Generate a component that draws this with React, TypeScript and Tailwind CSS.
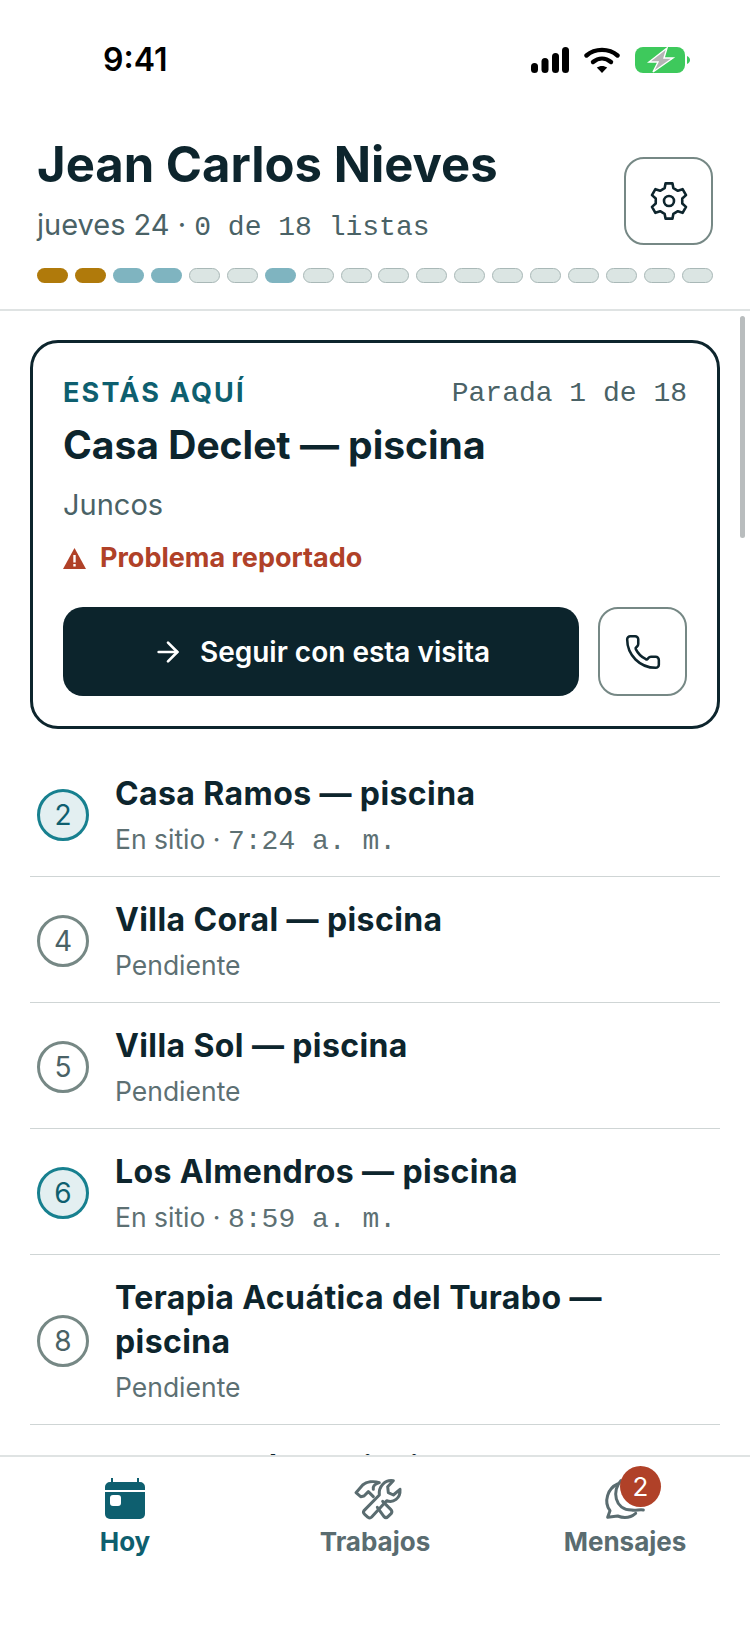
import { ArrowRight, Phone } from "lucide-react";

const sans = "font-['Inter','Noto_Sans',sans-serif]";
const mono = "font-['Liberation_Mono',monospace] text-[28px] leading-none";

const pills = [
  "a", "a", "t", "t", "g", "g", "t", "g", "g", "g", "g", "g", "g", "g", "g", "g", "g", "g",
];

const stops = [
  { n: 2, title: "Casa Ramos — piscina", active: true, time: "7:24 a. m." },
  { n: 4, title: "Villa Coral — piscina" },
  { n: 5, title: "Villa Sol — piscina" },
  { n: 6, title: "Los Almendros — piscina", active: true, time: "8:59 a. m." },
  { n: 8, title: "Terapia Acuática del Turabo — piscina" },
  { n: 9, title: "Casa María — piscina" },
];

const StatusBar = () => (
  <div className="h-[118px] shrink-0 flex items-start justify-between pl-[103px] pr-[60px] pt-[41px]">
    <span className="text-[32px] leading-[38px] font-semibold text-black">9:41</span>
    <div className="flex items-center gap-[15px] pt-[6px]">
      <svg width="38" height="26" viewBox="0 0 38 26" fill="#000">
        <rect x="0" y="16" width="7" height="10" rx="3.5" />
        <rect x="10.5" y="11" width="7" height="15" rx="3.5" />
        <rect x="21" y="6" width="7" height="20" rx="3.5" />
        <rect x="31" y="0" width="7" height="26" rx="3.5" />
      </svg>
      <svg width="36" height="26" viewBox="0 0 36 26" fill="none" stroke="#000" strokeWidth="4.4" strokeLinecap="round">
        <path d="M2.5 8.5C11 1 25 1 33.5 8.5" />
        <path d="M9 15C14.5 10.5 21.5 10.5 27 15" />
        <path d="M18 26l-5.2-5.4c3-2.2 7.4-2.2 10.4 0z" fill="#000" stroke="none" />
      </svg>
      <svg width="55" height="26" viewBox="0 0 55 26">
        <rect x="0" y="0" width="50" height="26" rx="8" fill="#3ec95c" />
        <path d="M52 9c2 1 3 2.4 3 4s-1 3-3 4z" fill="#3ec95c" />
        <path d="M32 1 14 15h9l-5 10 20-14h-9l3-10z" fill="#b5b5b5" stroke="#fff" strokeWidth="1.4" />
      </svg>
    </div>
  </div>
);

const GearIcon = () => (
  <svg width="40" height="42" viewBox="-2 -2 40 42" fill="none" stroke="currentColor" strokeWidth="2.6" strokeLinejoin="round">
    <path d="M13.6 6.24 14.57 1.33H21.43L22.4 6.24 26.86 8.81 31.59 7.19 35.02 13.14 31.25 16.42V21.58L35.02 24.86 31.59 30.81 26.86 29.19 22.4 31.76 21.43 36.67H14.57L13.6 31.76 9.14 29.19 4.41 30.81 0.98 24.86 4.75 21.58V16.42L0.98 13.14 4.41 7.19 9.14 8.81Z" />
    <circle cx="18" cy="19" r="5" />
  </svg>
);

const StopRow = ({ n, title, active, time }: { n: number; title: string; active?: boolean; time?: string }) => (
  <div className="flex items-center gap-[26px] pl-[7px] pt-[21px] pb-[19px] border-b border-[#cfd5d5]">
    <div
      className={
        active
          ? "w-[52px] h-[52px] shrink-0 rounded-full border-[3.5px] border-[#17808f] bg-[#e3eff1] text-[#0e5f6f] flex items-center justify-center text-[28px]"
          : "w-[52px] h-[52px] shrink-0 rounded-full border-[3.5px] border-[#768885] bg-white text-[#4a6266] flex items-center justify-center text-[28px]"
      }
    >
      {n}
    </div>
    <div className="min-w-0 flex-1">
      <div className="text-[32px] leading-[44px] font-bold tracking-[0.4px] text-[#0d252d] pr-[60px]">{title}</div>
      <div className="mt-[5px] text-[26.5px] leading-[36px] text-[#5d7073]">
        {active ? (
          <>
            En sitio · <span className={mono}>{time}</span>
          </>
        ) : (
          "Pendiente"
        )}
      </div>
    </div>
  </div>
);

const App = () => {
  return (
    <div className={`w-[750px] h-[1630px] bg-white flex flex-col overflow-hidden ${sans}`}>
      <StatusBar />

      <header className="shrink-0 px-[37px] pb-[26px] border-b-2 border-[#dfe3e3] mt-[20px]">
        <div className="flex justify-between">
          <div>
            <h1 className="text-[49px] leading-[54px] font-bold text-[#0d252d]">Jean Carlos Nieves</h1>
            <p className="mt-[13px] text-[29px] leading-[40px] text-[#4a6266]">
              jueves 24 · <span className={mono}>0 de 18 listas</span>
            </p>
          </div>
          <button className="mt-[19px] w-[89px] h-[88px] rounded-[20px] border-2 border-[#768885] flex items-center justify-center text-[#0d252d]">
            <GearIcon />
          </button>
        </div>
        <div className="mt-[23px] flex justify-between">
          {pills.map((p, i) => (
            <span
              key={i}
              className={
                p === "a"
                  ? "w-[31px] h-[15px] rounded-full bg-[#b07a0b]"
                  : p === "t"
                    ? "w-[31px] h-[15px] rounded-full bg-[#7fb4c0]"
                    : "w-[31px] h-[15px] rounded-full bg-[#dbe5e3] border border-[#a9b8b7]"
              }
            />
          ))}
        </div>
      </header>

      <main className="flex-1 min-h-0 overflow-hidden relative px-[30px] pt-[29px]">
        <div className="absolute right-[5px] top-[5px] w-[5px] h-[222px] rounded-full bg-[#b9bdbe]" />

        <section className="rounded-[28px] border-[3px] border-[#0d252d] px-[30px] pt-[32px] pb-[30px]">
          <div className="flex items-center justify-between">
            <span className="text-[27px] leading-[36px] font-bold tracking-[2.2px] text-[#0e5f6f]">ESTÁS AQUÍ</span>
            <span className={`${mono} pt-[2px] text-[#4a6266]`}>Parada 1 de 18</span>
          </div>
          <h2 className="mt-[10px] text-[39px] leading-[48px] font-bold text-[#0d252d]">Casa Declet — piscina</h2>
          <p className="mt-[18px] text-[29px] leading-[36px] text-[#4a6266]">Juncos</p>
          <p className="mt-[17px] flex items-center gap-[14px] text-[27px] leading-[36px] font-bold text-[#b04128]">
            <svg width="23" height="21" viewBox="0 0 23 21">
              <path d="M11.5 0 23 21H0z" fill="#b04128" />
              <rect x="10.3" y="7" width="2.4" height="7.5" fill="#fff" />
              <rect x="10.3" y="16" width="2.4" height="2.5" fill="#fff" />
            </svg>
            Problema reportado
          </p>
          <div className="mt-[31px] flex gap-[19px]">
            <button className="flex-1 h-[89px] rounded-[20px] bg-[#0c242c] text-white flex items-center justify-center gap-[16px] text-[28px] font-semibold">
              <ArrowRight size={32} strokeWidth={2} />
              Seguir con esta visita
            </button>
            <button className="w-[89px] h-[89px] rounded-[20px] border-2 border-[#768885] flex items-center justify-center text-[#0d252d]">
              <Phone size={38} strokeWidth={1.6} />
            </button>
          </div>
        </section>

        <div className="mt-[22px]">
          {stops.map((s) => (
            <StopRow key={s.n} {...s} />
          ))}
        </div>
      </main>

      <nav className="h-[175px] shrink-0 grid grid-cols-3 border-t-2 border-[#dfe3e3] bg-white pt-[21px]">
        <div className="flex flex-col items-center">
          <svg width="42" height="42" viewBox="0 0 42 42">
            <path d="M7 0h2v4h24V0h2v4h1a5 5 0 0 1 5 5v3H1V9a5 5 0 0 1 5-5h1z" fill="#0e5f6f" />
            <path d="M1 14h40v22a5 5 0 0 1-5 5H6a5 5 0 0 1-5-5z" fill="#0e5f6f" />
            <rect x="6" y="17" width="11" height="11" rx="3" fill="#fff" />
          </svg>
          <span className="mt-[4px] text-[26px] leading-[36px] font-bold text-[#0e5f6f]">Hoy</span>
        </div>
        <div className="flex flex-col items-center">
          <svg width="70" height="55" viewBox="0 0 210 165" fill="none" stroke="#5a6c70" strokeWidth="9" strokeLinejoin="round" strokeLinecap="round" className="-mt-[8px] -mb-[5px]">
            <path d="M118 75 72 122q-4 6 2 11l10 9q6 4 11-1l45-49c20 8 42-7 40-34l-20 17-15-7-2-18 17-18c-25-4-45 18-42 43z" />
            <path d="M112 112l20 28q6 6 12 0l10-10q4-6-2-12l-24-24" />
            <path d="M100 80 85 65 72 78l-10 2-14-12 20-23c12-10 32-13 50-7-13 4-20 12-18 20" />
          </svg>
          <span className="mt-[4px] text-[26px] leading-[36px] font-bold text-[#5a6c70]">Trabajos</span>
        </div>
        <div className="flex flex-col items-center">
          <div className="relative h-[42px] w-[42px]">
            <svg width="75" height="65" viewBox="0 0 225 195" fill="none" stroke="#5a6c70" strokeWidth="9" strokeLinejoin="round" strokeLinecap="round" className="-ml-[9px] -mt-[18px]">
              <path d="M68 72C38 85 25 125 45 152l-7 20 30-4c20 8 40 4 54-8" />
              <path d="M78 62c-28 28-20 88 32 88 12 2 25-2 35 0" />
            </svg>
            <span className="absolute -top-[12px] left-[16px] w-[41px] h-[41px] rounded-full bg-[#b04128] text-white text-[26px] flex items-center justify-center">
              2
            </span>
          </div>
          <span className="mt-[4px] text-[26px] leading-[36px] font-bold text-[#5a6c70]">Mensajes</span>
        </div>
      </nav>
    </div>
  );
};

export default App;
